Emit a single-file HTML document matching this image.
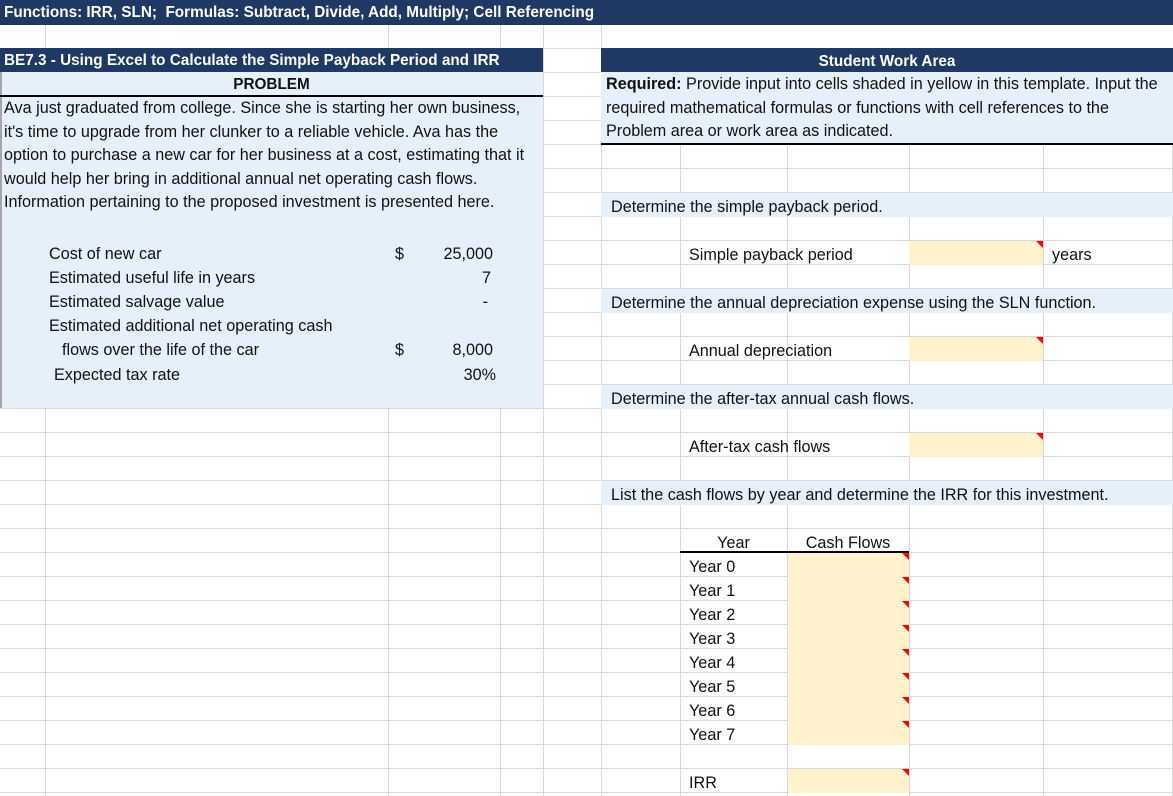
<!DOCTYPE html>
<html><head><meta charset="utf-8"><style>
*{margin:0;padding:0;box-sizing:border-box}
body{width:1173px;height:796px;overflow:hidden;position:relative;background:#fff;font-family:"Liberation Sans",Arial,sans-serif;font-size:16.2px;color:#111}
.h{position:absolute;left:0;width:1173px;height:1px;background:#d9d9d9}
.v{position:absolute;top:0;width:1px;height:796px;background:#d9d9d9}
.f{position:absolute}
.t{position:absolute;white-space:nowrap;height:24px;line-height:26px}
.dark{background:#203864;color:#fff;font-weight:bold}
.lb{background:#e6f0fa}
.y{background:#fff2cc}
.tri{position:absolute;width:0;height:0;border-top:7px solid #f00;border-left:7px solid transparent}
</style></head><body>
<div id="grid"></div>
<script>
var g=document.getElementById('grid'),s='';
for(var y=48;y<796;y+=24)s+='<div class="h" style="top:'+y+'px"></div>';
[45,388,500,543,601,680,787,909,1043,1172].forEach(function(x){s+='<div class="v" style="left:'+x+'px"></div>';});
g.innerHTML=s;
</script>
<div class="f dark" style="left:0;top:0;width:1173px;height:25px"></div>
<div class="t" style="left:4px;top:0;color:#fff;font-weight:bold;line-height:26px;font-size:15.3px">Functions: IRR, SLN;&nbsp; Formulas: Subtract, Divide, Add, Multiply; Cell Referencing</div>
<div class="f" style="left:0;top:25px;width:1173px;height:23px;background:#fff"></div>
<div class="v" style="left:45px;top:25px;height:23px"></div><div class="v" style="left:388px;top:25px;height:23px"></div><div class="v" style="left:500px;top:25px;height:23px"></div><div class="v" style="left:543px;top:25px;height:23px"></div><div class="v" style="left:601px;top:25px;height:23px"></div>

<div class="f dark" style="left:0;top:48px;width:543px;height:24px"></div>
<div class="t" style="left:4px;top:48px;color:#fff;font-weight:bold;font-size:15.3px">BE7.3 - Using Excel to Calculate the Simple Payback Period and IRR</div>
<div class="f lb" style="left:0;top:72px;width:543px;height:336px;border-left:2px solid #a6a6a6"></div>
<div class="t" style="left:0;top:72px;width:543px;text-align:center;font-weight:bold;font-size:15.3px">PROBLEM</div>
<div class="f" style="left:0;top:95px;width:543px;height:2px;background:#000"></div>
<div class="f" style="left:4px;top:97px;width:560px;line-height:23.5px;font-size:16.2px;white-space:nowrap">Ava just graduated from college. Since she is starting her own business,<br>it's time to upgrade from her clunker to a reliable vehicle. Ava has the<br>option to purchase a new car for her business at a cost, estimating that it<br>would help her bring in additional annual net operating cash flows.<br>Information pertaining to the proposed investment is presented here.</div>
<div class="t" style="left:49px;top:241px">Cost of new car</div>
<div class="t" style="left:49px;top:265px">Estimated useful life in years</div>
<div class="t" style="left:49px;top:289px">Estimated salvage value</div>
<div class="t" style="left:49px;top:313px">Estimated additional net operating cash</div>
<div class="t" style="left:62px;top:337px">flows over the life of the car</div>
<div class="t" style="left:54px;top:362px">Expected tax rate</div>
<div class="t" style="left:395px;top:241px">$</div>
<div class="t" style="left:395px;top:337px">$</div>
<div class="t" style="left:400px;top:241px;width:93px;text-align:right">25,000</div>
<div class="t" style="left:400px;top:265px;width:91px;text-align:right">7</div>
<div class="t" style="left:400px;top:289px;width:88px;text-align:right">-</div>
<div class="t" style="left:400px;top:337px;width:93px;text-align:right">8,000</div>
<div class="t" style="left:400px;top:362px;width:96px;text-align:right">30%</div>

<div class="f dark" style="left:601px;top:48px;width:572px;height:24px"></div>
<div class="t" style="left:601px;top:49px;width:572px;text-align:center;color:#fff;font-weight:bold;font-size:15.3px">Student Work Area</div>
<div class="f lb" style="left:601px;top:72px;width:572px;height:72px"></div>
<div class="f" style="left:601px;top:143px;width:572px;height:2px;background:#000"></div>
<div class="f" style="left:606px;top:73px;line-height:23.5px;font-size:16.2px;white-space:nowrap"><b>Required:</b> Provide input into cells shaded in yellow in this template. Input the<br>required mathematical formulas or functions with cell references to the<br>Problem area or work area as indicated.</div>

<div class="f lb" style="left:601px;top:193px;width:572px;height:24px"></div>
<div class="t" style="left:611px;top:194px">Determine the simple payback period.</div>
<div class="t" style="left:689px;top:242px">Simple payback period</div>
<div class="f y" style="left:909px;top:241px;width:134px;height:24px"></div><div class="tri" style="left:1036px;top:241px"></div>
<div class="t" style="left:1052px;top:242px">years</div>

<div class="f lb" style="left:601px;top:289px;width:572px;height:24px"></div>
<div class="t" style="left:611px;top:290px">Determine the annual depreciation expense using the SLN function.</div>
<div class="t" style="left:689px;top:338px">Annual depreciation</div>
<div class="f y" style="left:909px;top:337px;width:134px;height:24px"></div><div class="tri" style="left:1036px;top:337px"></div>

<div class="f lb" style="left:601px;top:385px;width:572px;height:24px"></div>
<div class="t" style="left:611px;top:386px">Determine the after-tax annual cash flows.</div>
<div class="t" style="left:689px;top:434px">After-tax cash flows</div>
<div class="f y" style="left:909px;top:433px;width:134px;height:24px"></div><div class="tri" style="left:1036px;top:433px"></div>

<div class="f lb" style="left:601px;top:481px;width:572px;height:24px"></div>
<div class="t" style="left:611px;top:482px">List the cash flows by year and determine the IRR for this investment.</div>

<div class="t" style="left:680px;top:530px;width:107px;text-align:center">Year</div>
<div class="t" style="left:787px;top:530px;width:122px;text-align:center">Cash Flows</div>
<div class="f" style="left:680px;top:551px;width:229px;height:2px;background:#000"></div>
<div class="f y" style="left:788px;top:553px;width:121px;height:192px"></div>
<div class="f y" style="left:788px;top:769px;width:121px;height:24px"></div>
<div id="yrs"></div>
<script>
var h='';for(var i=0;i<8;i++){var t=553+24*i;h+='<div class="t" style="left:689px;top:'+(t+1)+'px">Year '+i+'</div><div class="tri" style="left:902px;top:'+t+'px"></div>';}
h+='<div class="t" style="left:689px;top:770px">IRR</div><div class="tri" style="left:902px;top:769px"></div>';
document.getElementById('yrs').innerHTML=h;
</script>
</body></html>
